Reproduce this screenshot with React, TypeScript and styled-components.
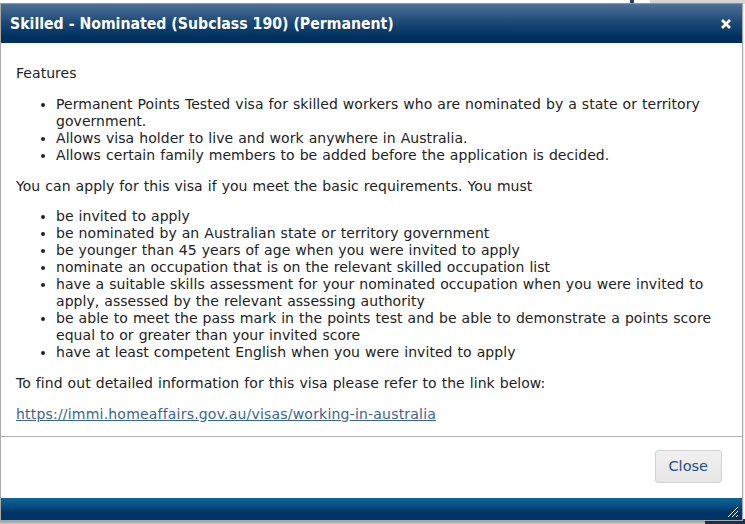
import React from "react";
import styled, { createGlobalStyle } from "styled-components";

const Global = createGlobalStyle`
  html, body { margin: 0; padding: 0; background: #fff; }
  body { font-family: "DejaVu Sans", Verdana, sans-serif; }
`;

const Page = styled.div`
  position: relative;
  width: 745px;
  height: 524px;
  overflow: hidden;
  background: #fff;
`;

const BackStrip = styled.div<{ $l: number; $t: number; $w: number; $h: number; $c: string }>`
  position: absolute;
  left: ${(p) => p.$l}px;
  top: ${(p) => p.$t}px;
  width: ${(p) => p.$w}px;
  height: ${(p) => p.$h}px;
  background: ${(p) => p.$c};
`;

const Dialog = styled.div`
  position: absolute;
  left: 0;
  top: 3px;
  width: 741px;
  height: 516px;
  border: 1px solid #a9a9a9;
  border-top-color: #8899aa;
  background: #fff;
  display: flex;
  flex-direction: column;
  box-shadow: 0 1px 2px rgba(0, 0, 0, 0.25);
`;

const TitleBar = styled.div`
  height: 39px;
  flex: 0 0 39px;
  display: flex;
  align-items: center;
  justify-content: space-between;
  padding: 0 10px 0 9px;
  background: linear-gradient(to bottom, #4d7196 0%, #1f4a78 45%, #00305f 85%, #003062 100%);
  color: #fff;
`;

const Title = styled.h1`
  margin: 0;
  font-family: "DejaVu Sans Condensed", "DejaVu Sans", sans-serif;
  font-stretch: condensed;
  font-weight: bold;
  font-size: 15.7px;
`;

const CloseX = styled.button`
  border: 0;
  background: transparent;
  padding: 0;
  width: 12px;
  height: 12px;
  display: flex;
  cursor: pointer;
`;

const Body = styled.div`
  flex: 1 1 0;
  min-height: 0;
  overflow: hidden;
  padding: 8px 15px 0 15px;
  color: #222;
  font-size: 14px;
  letter-spacing: 0.05px;
  word-spacing: 0.5px;
  line-height: 16.9px;
  border-bottom: 1px solid #b3b3b3;
`;

const Para = styled.p`
  margin: 14px 0;
`;

const List = styled.ul`
  margin: 14px 0;
  padding-left: 40px;
`;

const Link = styled.a`
  color: #3a6593;
  letter-spacing: 0.2px;
  text-decoration: underline;
`;

const Footer = styled.div`
  flex: 0 0 61px;
  display: flex;
  align-items: center;
  justify-content: flex-end;
  padding: 0 20px 0 0;
`;

const Button = styled.button`
  height: 33px;
  padding: 0 13px;
  border: 1px solid #d2d2d2;
  border-radius: 3px;
  background: linear-gradient(to bottom, #f0f0f0, #e7e7e7);
  color: #1f4f80;
  font-family: "DejaVu Sans", Verdana, sans-serif;
  font-size: 14.5px;
  margin-bottom: 3px;
`;

const BottomBar = styled.div`
  flex: 0 0 22px;
  position: relative;
  background: linear-gradient(to bottom, #0e6496 0%, #074f82 35%, #003466 65%, #003366 100%);
`;

const Grip = styled.svg`
  position: absolute;
  right: 4px;
  bottom: 3px;
`;

const features = [
  "Permanent Points Tested visa for skilled workers who are nominated by a state or territory government.",
  "Allows visa holder to live and work anywhere in Australia.",
  "Allows certain family members to be added before the application is decided.",
];

const reqs = [
  "be invited to apply",
  "be nominated by an Australian state or territory government",
  "be younger than 45 years of age when you were invited to apply",
  "nominate an occupation that is on the relevant skilled occupation list",
  "have a suitable skills assessment for your nominated occupation when you were invited to apply, assessed by the relevant assessing authority",
  "be able to meet the pass mark in the points test and be able to demonstrate a points score equal to or greater than your invited score",
  "have at least competent English when you were invited to apply",
];

export default function App() {
  return (
    <Page>
      <Global />
      <BackStrip $l={630} $t={0} $w={4} $h={4} $c="#2b3f63" />
      <BackStrip $l={650} $t={0} $w={95} $h={4} $c="#d6d6d6" />
      <BackStrip $l={0} $t={519} $w={745} $h={5} $c="#c4c4c4" />
      <BackStrip $l={705} $t={519} $w={40} $h={5} $c="#1f3350" />
      <Dialog>
        <TitleBar>
          <Title>Skilled - Nominated (Subclass 190) (Permanent)</Title>
          <CloseX aria-label="close">
            <svg width="12" height="12" viewBox="0 0 12 12">
              <path d="M2 2 L10 10 M10 2 L2 10" stroke="#fff" strokeWidth="2.8" strokeLinecap="butt" />
            </svg>
          </CloseX>
        </TitleBar>
        <Body>
          <Para>Features</Para>
          <List>
            {features.map((f) => (
              <li key={f}>{f}</li>
            ))}
          </List>
          <Para>You can apply for this visa if you meet the basic requirements. You must</Para>
          <List>
            {reqs.map((r) => (
              <li key={r}>{r}</li>
            ))}
          </List>
          <Para>To find out detailed information for this visa please refer to the link below:</Para>
          <Para>
            <Link href="#">https://immi.homeaffairs.gov.au/visas/working-in-australia</Link>
          </Para>
        </Body>
        <Footer>
          <Button>Close</Button>
        </Footer>
        <BottomBar>
          <Grip width="11" height="11" viewBox="0 0 11 11">
            <path d="M1 11 L11 1 M5 11 L11 5 M9 11 L11 9" stroke="#fff" strokeWidth="1" />
          </Grip>
        </BottomBar>
      </Dialog>
    </Page>
  );
}
